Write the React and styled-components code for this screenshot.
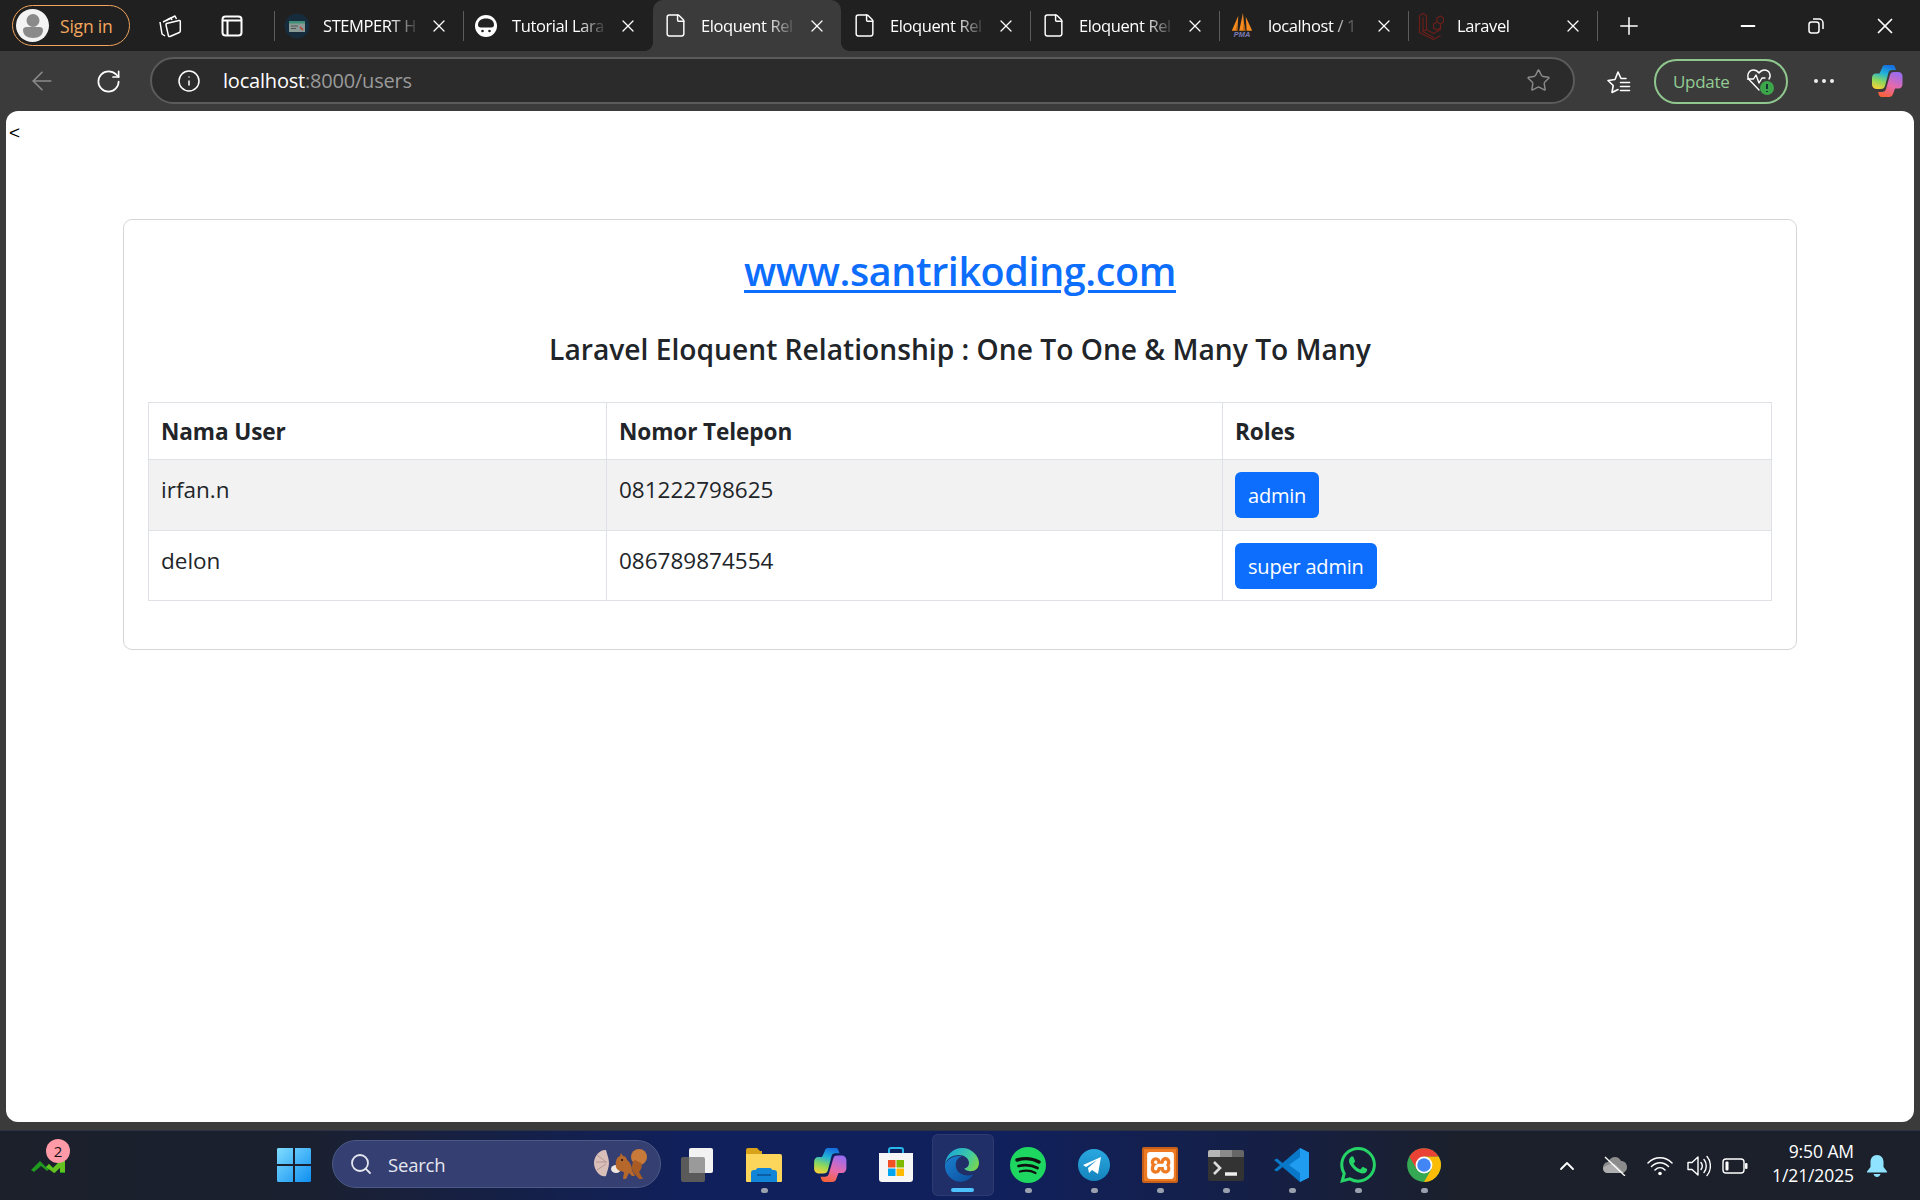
import styled, { createGlobalStyle } from 'styled-components';
import { X, Plus, ArrowLeft, RotateCw, Info, Star, Minus, ChevronUp, Search, File } from 'lucide-react';
import { SiWhatsapp, SiXampp } from 'react-icons/si';

const uiFont = `"Open Sans", "Noto Sans", "Liberation Sans", sans-serif`;

const Global = createGlobalStyle`
  html, body { margin: 0; padding: 0; background: #3b3b3b; }
  * { box-sizing: border-box; }
  svg { display: block; }
`;

const Screen = styled.div`
  width: 1920px;
  height: 1200px;
  display: flex;
  flex-direction: column;
  overflow: hidden;
  background: #3b3b3b;
  font-family: ${uiFont};
`;

/* ---------- tab strip ---------- */
const TabBar = styled.div`
  height: 51px;
  flex: none;
  display: flex;
  background: #202020;
  color: #fff;
`;

const ProfilePill = styled.div`
  width: 118px;
  height: 41px;
  margin: 5px 0 0 12px;
  padding-left: 3px;
  display: flex;
  align-items: center;
  gap: 11px;
  border: 1px solid #f0a45c;
  border-radius: 21px;
  color: #f4a75e;
  font-size: 17.5px;
  letter-spacing: -0.2px;
`;

const Avatar = styled.div`
  width: 33px;
  height: 33px;
  border-radius: 50%;
  background: #f3f3f3;
  display: flex;
  align-items: center;
  justify-content: center;
`;

const BarButton = styled.div`
  width: ${p => p.$w || 62}px;
  height: 51px;
  margin-left: ${p => p.$ml || 0}px;
  flex: none;
  display: flex;
  align-items: center;
  justify-content: center;
  color: ${p => p.$color || '#fff'};
`;

const TabSep = styled.div`
  width: 1px;
  height: 30px;
  margin-top: 11px;
  flex: none;
  background: ${p => (p.$hidden ? 'transparent' : '#5c5c5c')};
`;

const Tab = styled.div`
  position: relative;
  width: 188px;
  height: 51px;
  flex: none;
  display: flex;
  align-items: center;
  padding: 0 14px 0 9px;
  background: ${p => (p.$active ? '#3b3b3b' : 'transparent')};
  border-radius: ${p => (p.$active ? '10px 10px 0 0' : '0')};

  ${p => p.$active && `
    &::before, &::after {
      content: '';
      position: absolute;
      bottom: 0;
      width: 8px;
      height: 8px;
    }
    &::before { left: -8px; background: radial-gradient(circle at 0 0, #202020 7.5px, #3b3b3b 8px); }
    &::after { right: -8px; background: radial-gradient(circle at 100% 0, #202020 7.5px, #3b3b3b 8px); }
  `}
`;

const Favicon = styled.div`
  width: 26px;
  height: 26px;
  flex: none;
  display: flex;
  align-items: center;
  justify-content: center;
`;

const TabTitle = styled.div`
  margin-left: 13px;
  flex: none;
  font-size: 16.5px;
  letter-spacing: -0.4px;
  white-space: nowrap;
  -webkit-mask-image: linear-gradient(to right, #000 ${p => p.$fade ? '72%' : '100%'}, rgba(0,0,0,.12) 100%);
  mask-image: linear-gradient(to right, #000 ${p => p.$fade ? '72%' : '100%'}, rgba(0,0,0,.12) 100%);
`;

const TabClose = styled.div`
  margin-left: auto;
  flex: none;
`;

const WindowControls = styled.div`
  margin-left: auto;
  display: flex;
`;

/* ---------- toolbar ---------- */
const Toolbar = styled.div`
  height: 60px;
  flex: none;
  display: flex;
  align-items: center;
  padding-left: 9px;
  background: #3b3b3b;
  color: #fff;
`;

const ToolButton = styled.div`
  width: ${p => p.$w || 66}px;
  height: 46px;
  margin-left: ${p => p.$ml || 0}px;
  flex: none;
  display: flex;
  align-items: center;
  justify-content: center;
  color: ${p => p.$color || '#fff'};
`;

const AddressBar = styled.div`
  width: 1425px;
  height: 47px;
  margin-left: 9px;
  margin-top: -1px;
  flex: none;
  display: flex;
  align-items: center;
  padding-left: 25px;
  border: 2px solid #5b5b5b;
  border-radius: 24px;
  background: #2b2b2b;
`;

const Url = styled.div`
  margin-left: 22px;
  font-size: 20px;
  letter-spacing: -0.2px;
  color: #9a9a9a;

  b { font-weight: 400; color: #fff; }
`;

const AddressStar = styled.div`
  margin-left: auto;
  margin-right: 22px;
  color: #8a8a8a;
`;

const UpdatePill = styled.div`
  width: 134px;
  height: 45px;
  margin-left: 13px;
  flex: none;
  display: flex;
  align-items: center;
  padding-left: 17px;
  gap: 16px;
  border: 2px solid #8fc78f;
  border-radius: 23px;
  color: #93cc93;
  font-size: 17px;
  letter-spacing: -0.3px;
`;

const Dots = styled.div`
  display: flex;
  gap: 4px;

  span {
    width: 4px;
    height: 4px;
    border-radius: 50%;
    background: #eee;
  }
`;

/* ---------- page ---------- */
const Page = styled.main`
  width: 1908px;
  height: 1011px;
  flex: none;
  margin-left: 6px;
  padding-top: 10px;
  background: #fff;
  border-radius: 12px;
  overflow: hidden;
`;

const Stray = styled.div`
  height: 22px;
  padding-left: 3px;
  font-family: "Liberation Sans", sans-serif;
  font-size: 19px;
  line-height: 24px;
  color: #000;
`;

const Card = styled.section`
  width: 1674px;
  height: 431px;
  margin: 76px 0 0 117px;
  padding: 0 24px;
  border: 1.5px solid #d3d6d9;
  border-radius: 9px;
  text-align: center;
  color: #212529;
`;

const SiteTitle = styled.h3`
  margin: 19px 0 0;
  font-size: 39.5px;
  font-weight: 600;
  line-height: 64px;
  letter-spacing: -0.4px;

  a {
    color: #0d6efd;
    text-decoration: underline;
    text-decoration-thickness: 3px;
    text-underline-offset: 4px;
  }
`;

const SubTitle = styled.h5`
  margin: 24px 0 0;
  font-size: 28.2px;
  font-weight: 600;
  line-height: 44px;
`;

const UserTable = styled.table`
  width: 1624px;
  margin-top: 31px;
  border-collapse: collapse;
  table-layout: fixed;
  text-align: left;
  font-size: 22.5px;
`;

const Th = styled.th`
  height: 57px;
  padding: 0 12px 0;
  border: 1.5px solid #dee2e6;
  font-weight: 700;
  font-size: 22.6px;
  letter-spacing: -0.1px;
`;

const Row = styled.tr`
  background: ${p => (p.$striped ? '#f2f2f2' : '#fff')};
`;

const Td = styled.td`
  height: ${p => p.$h}px;
  padding: 15px 12px 0;
  border: 1.5px solid #dee2e6;
  vertical-align: top;
  line-height: 30px;
`;

const RoleCell = styled(Td)`
  padding-top: 12px;
`;

const RoleButton = styled.button`
  display: block;
  height: 46px;
  padding: 0 13px;
  border: none;
  border-radius: 6px;
  background: #0d6efd;
  color: #fff;
  font-family: ${uiFont};
  font-size: 20px;
  letter-spacing: -0.2px;
`;

const Gap = styled.div`
  height: 8px;
  flex: none;
  background: #3b3b3b;
`;

/* ---------- taskbar ---------- */
const Taskbar = styled.footer`
  height: 70px;
  flex: 1;
  display: flex;
  border-top: 1px solid #2c3345;
  background: linear-gradient(90deg, #1b202b 0%, #1b2030 16%, #10205c 36%, #10205c 52%, #151f45 66%, #1b202b 76%, #1b202b 100%);
  color: #fff;
`;

const Widget = styled.div`
  position: relative;
  width: 36px;
  height: 70px;
  margin-left: 30px;
  padding-top: 26px;
  flex: none;
`;

const Badge = styled.span`
  position: absolute;
  left: 16px;
  top: 8px;
  width: 24px;
  height: 24px;
  border-radius: 50%;
  background: #ff9aa6;
  color: #111;
  font-size: 15px;
  line-height: 24px;
  text-align: center;
`;

const StartButton = styled.div`
  margin: 16px 0 0 210px;
  flex: none;
`;

const SearchBox = styled.div`
  width: 329px;
  height: 48px;
  margin: 9px 0 0 20px;
  padding: 0 10px 0 16px;
  flex: none;
  display: flex;
  align-items: center;
  border: 1px solid #4b5a86;
  border-radius: 24px;
  background: #353f72;
  color: #e6e8f0;
  font-size: 18.5px;
`;

const SearchLabel = styled.span`
  margin-left: 15px;
  letter-spacing: -0.2px;
`;

const SearchArt = styled.div`
  margin-left: auto;
`;

const AppRow = styled.div`
  margin-left: 4px;
  display: flex;
  flex: none;
`;

const AppCell = styled.div`
  position: relative;
  width: 66px;
  height: 70px;
  padding-top: 16px;
  display: flex;
  flex-direction: column;
  align-items: center;

  ${p => p.$active && `
    &::before {
      content: '';
      position: absolute;
      left: 3px;
      top: 3px;
      width: 60px;
      height: 60px;
      border-radius: 6px;
      background: rgba(255,255,255,.07);
      border: 1px solid rgba(255,255,255,.06);
    }
  `}
`;

const AppIcon = styled.div`
  position: relative;
  width: 36px;
  height: 36px;
`;

const RunDot = styled.span`
  width: ${p => (p.$active ? 23 : 7)}px;
  height: ${p => (p.$active ? 4 : 5)}px;
  margin-top: 5px;
  position: relative;
  border-radius: 3px;
  background: ${p => (p.$active ? '#4cc2ff' : p.$off ? 'transparent' : '#9aa0ad')};
`;

const Tray = styled.div`
  margin-left: auto;
  padding-right: 32px;
  display: flex;
  align-items: center;
`;

const TrayIcon = styled.div`
  width: ${p => p.$w}px;
  flex: none;
  display: flex;
  justify-content: center;
  color: #fff;
`;

const Clock = styled.div`
  width: 100px;
  margin: -5px 0 0 1px;
  text-align: right;
  font-size: 17.5px;
  line-height: 24px;
  letter-spacing: -0.1px;
`;

const BellBox = styled.div`
  margin-left: 12px;
  color: #8fe3ff;
`;

/* ---------- drawings ---------- */
const ProfileGlyph = () => (
  <svg width="26" height="28" viewBox="0 0 26 28">
    <circle cx="13" cy="8.5" r="6.5" fill="#8a8a8a" />
    <path d="M3 18c0-2 1.500-3 3.500-3h13c2 0 3.500 1 3.500 3 0 5-4 8-10 8S3 23 3 18z" fill="#8a8a8a" />
  </svg>
);

const WorkspacesIcon = () => (
  <svg width="26" height="26" viewBox="0 0 26 26" fill="none" stroke="#fff" strokeWidth="1.5" strokeLinejoin="round">
    <path d="M10 7l8-4 1.500 3" />
    <path d="M6 9l8-4 1 2" />
    <path d="M3 9l2 12 3 2" />
    <path d="M9.500 10.500L22 7.500c.8-.2 1.300.2 1.300 1V18c0 .7-.3 1.200-1 1.500L13 23.500c-.8.300-1.500 0-1.600-.8L9 12c-.1-.7 0-1.300.5-1.500z" />
  </svg>
);

const VerticalTabsIcon = () => (
  <svg width="22" height="22" viewBox="0 0 22 22" fill="none" stroke="#fff" strokeWidth="2">
    <rect x="1.500" y="1.500" width="19" height="19" rx="3" />
    <path d="M1.500 5.500h19M6.500 5.500v15" />
  </svg>
);

const WindowFav = () => (
  <svg width="26" height="26" viewBox="0 0 26 26">
    <circle cx="13" cy="13" r="12.500" fill="#162b3b" />
    <rect x="5" y="8" width="16" height="11" fill="#8a9a96" />
    <rect x="5" y="8" width="16" height="2.500" fill="#3f8f78" />
    <path d="M7 13h7M7 15.500h5" stroke="#555" strokeWidth="1" />
    <path d="M16 14l3 3" stroke="#c0392b" strokeWidth="1.500" />
  </svg>
);

const HatFav = () => (
  <svg width="24" height="24" viewBox="0 0 24 24">
    <circle cx="12" cy="12" r="11" fill="#fff" />
    <path d="M4 11c0-4 3-6.500 8-6.500S20 7 20 11c0 1.500-1 2.500-2.500 2.500h-11C5 13.500 4 12.500 4 11z" fill="#222" />
    <circle cx="8.500" cy="17" r="1.300" fill="#222" />
    <circle cx="15.500" cy="17" r="1.300" fill="#222" />
  </svg>
);

const PmaFav = () => (
  <svg width="28" height="28" viewBox="0 0 28 28">
    <path d="M3 19L10 3 9 19zM11 19L15 0l2 19zM19 19L18 4l7 15z" fill="#f58a1f" />
    <path d="M7 19l2-8v8zM15 19l1-9 2 9z" fill="#b9620f" />
    <text x="14" y="26" textAnchor="middle" fontSize="8" fontWeight="700" fontStyle="italic" fill="#7c7cb5" fontFamily="Liberation Sans">PMA</text>
  </svg>
);

const LaravelFav = () => (
  <svg width="26" height="28" viewBox="0 0 26 28" fill="none" stroke="#6b1f1a" strokeWidth="1.200" strokeLinejoin="round">
    <path d="M1.500 3.500l3.500-2 3.500 2v14l7 4 7-4v-5" />
    <path d="M1.500 3.500v17l14 7 7-4" />
    <path d="M5 5.500v14l10.500 6M8.500 17.500l-3.500 2" />
    <path d="M15.500 12l3.500-2 3.500 2v4l-3.500 2-3.500-2zM19 10V6l3.500-2 3 2v4l-3 2" />
  </svg>
);

const StarListIcon = () => (
  <svg width="26" height="26" viewBox="0 0 26 26" fill="none" stroke="#fff" strokeWidth="1.600" strokeLinejoin="round" strokeLinecap="round">
    <path d="M12 21.500l-6 3 1.200-7L2 12.500l7-1L12 4l3 6.500h5" />
    <path d="M14.500 14.500h9M14.500 18.500h9M14.500 22.500h9" />
  </svg>
);

const HeartIcon = () => (
  <svg width="30" height="30" viewBox="0 0 30 30">
    <g fill="none" stroke="#fff" strokeWidth="1.400" strokeLinejoin="round" strokeLinecap="round">
      <path d="M14 24L4.500 14C1 10 3.500 4 8.500 4c2.500 0 4 1 5.500 3 1.500-2 3-3 5.500-3 5 0 7 5.500 4.500 9" />
      <path d="M2.500 13h6l2.500-4 3 8 3-5h3" />
    </g>
    <circle cx="22" cy="22" r="7" fill="#3da64a" />
    <path d="M22 18v5M22 25v1" stroke="#123" strokeWidth="1.700" />
  </svg>
);

const CopilotIcon = ({ size = 34, id = 'cp' }) => (
  <svg width={size} height={size} viewBox="0 0 34 34">
    <defs>
      <linearGradient id={`${id}a`} x1="0.600" y1="0" x2="0.300" y2="1">
        <stop offset="0" stopColor="#1570e0" />
        <stop offset=".35" stopColor="#23b2d8" />
        <stop offset=".7" stopColor="#8ed85a" />
        <stop offset="1" stopColor="#f2d23a" />
      </linearGradient>
      <linearGradient id={`${id}b`} x1="0.700" y1="0" x2="0.300" y2="1">
        <stop offset="0" stopColor="#9a6cf0" />
        <stop offset=".55" stopColor="#e86aa8" />
        <stop offset="1" stopColor="#f5613a" />
      </linearGradient>
    </defs>
    <path d="M15 1h7c1.500 0 2.500.6 3 2l1 3h-4c-2 0-3 1-3.500 2.500L15 22c-.6 2-2 3-4 3H7c-3 0-5-2-5-4.500V14c0-2.500 1.500-4.500 4-4.500h3.500L12 4c.5-2 1.500-3 3-3z" fill={`url(#${id}a)`} />
    <path d="M26 8h2c3 0 4.500 2 4.500 4.500V20c0 2.500-1.500 4.500-4 4.500H25L23 30c-.5 2-2 3-4 3h-7c-1.500 0-2.500-.6-3-2l-1-3h4c2 0 3.500-1 4-3l4-14c.5-1.800 1.500-3 4-3z" fill={`url(#${id}b)`} />
  </svg>
);

const WinLogo = () => (
  <svg width="36" height="36" viewBox="0 0 36 36">
    <defs>
      <linearGradient id="win" x1="0" y1="0" x2="1" y2="1">
        <stop offset="0" stopColor="#7fdcff" />
        <stop offset="1" stopColor="#0f8ff0" />
      </linearGradient>
    </defs>
    <path d="M1 2.500C1 1.600 1.600 1 2.500 1H17v16H1zM19 1h14.500c.9 0 1.500.6 1.500 1.500V17H19zM1 19h16v16H2.500C1.600 35 1 34.400 1 33.500zM19 19h16v14.500c0 .9-.6 1.500-1.500 1.500H19z" fill="url(#win)" />
  </svg>
);

const SquirrelArt = () => (
  <svg width="58" height="34" viewBox="0 0 58 34">
    <path d="M2 16C2 8 9 2 14 3c1 4 3 9 3 13s-2 9-3 13C9 31 2 24 2 16z" fill="#d9bfb8" />
    <path d="M5 8l9 7M4 15h11M5 23l9-6" stroke="#a98e8a" strokeWidth=".8" />
    <ellipse cx="24" cy="22" rx="5" ry="4" fill="#efe6e0" />
    <path d="M24 20c-1-6 1-10 4-11l1-3 2 3c2 0 4 2 4 4 3 2 5 6 5 10l3 6h-3l-3-3-3 6h-3l1-7c-3-1-7-1-8-5z" fill="#b5672c" />
    <circle cx="47" cy="10" r="8" fill="#c77a3a" />
    <path d="M40 22c0-6 1-8 3-9l6 3c2 3 0 7-2 9l4 7h-4l-5-6z" fill="#a85c24" />
    <circle cx="30" cy="13" r="1" fill="#111" />
  </svg>
);

const TaskViewIcon = () => (
  <svg width="36" height="36" viewBox="0 0 36 36">
    <rect x="1" y="10" width="24" height="25" rx="2" fill="#5a5a5a" />
    <rect x="9" y="1" width="24" height="25" rx="2" fill="#f2f2f2" />
    <path d="M9 10h14a2 2 0 0 1 2 2v14H11a2 2 0 0 1-2-2z" fill="#9a9a9a" />
  </svg>
);

const ExplorerIcon = () => (
  <svg width="36" height="36" viewBox="0 0 36 36">
    <path d="M0 3a2 2 0 0 1 2-2h9l3 3h2v4H0z" fill="#d9a21b" />
    <path d="M0 7h34a2 2 0 0 1 2 2v25a1 1 0 0 1-1 1H1a1 1 0 0 1-1-1z" fill="#fbd65a" />
    <path d="M5 35l0-9a3 3 0 0 1 3-3h1.500l2-2h13l2 2H28a3 3 0 0 1 3 3v9z" fill="#1185d8" />
    <path d="M11 28h14" stroke="#0b5ea3" strokeWidth="2" />
  </svg>
);

const StoreIcon = () => (
  <svg width="36" height="36" viewBox="0 0 36 36">
    <path d="M11 6V3a2 2 0 0 1 2-2h10a2 2 0 0 1 2 2v3" fill="none" stroke="#29b6e8" strokeWidth="2" />
    <path d="M1 6h34v26a3 3 0 0 1-3 3H4a3 3 0 0 1-3-3z" fill="#f6f6f6" />
    <rect x="10" y="13" width="7.500" height="7.500" fill="#f25022" />
    <rect x="18.500" y="13" width="7.500" height="7.500" fill="#7fba00" />
    <rect x="10" y="21.500" width="7.500" height="7.500" fill="#00a4ef" />
    <rect x="18.500" y="21.500" width="7.500" height="7.500" fill="#ffb900" />
  </svg>
);

const EdgeIcon = () => (
  <svg width="36" height="36" viewBox="0 0 36 36">
    <defs>
      <linearGradient id="edgeTop" x1="0" y1="0.300" x2="1" y2="0.700">
        <stop offset="0" stopColor="#1aa5d8" />
        <stop offset=".6" stopColor="#3cc9a8" />
        <stop offset="1" stopColor="#7ad64e" />
      </linearGradient>
      <linearGradient id="edgeLow" x1="0" y1="0" x2="1" y2="1">
        <stop offset="0" stopColor="#1a7fd0" />
        <stop offset="1" stopColor="#0c4f9c" />
      </linearGradient>
    </defs>
    <path d="M1 17C2 8 9 1 18 1c10 0 17 8 17 15 0 6-5 9-10 8-3-.5-5-2-4.500-2.500C23 21 25 19 25 16c0-5-5-8-10-8C9 8 3 11 1 17z" fill="url(#edgeTop)" />
    <path d="M1 17c3-5 8-8 14-8 2 0 3 .3 3 .3-5 1.700-7 6-6 11 1 6 8 9 14 8 1.500-.2 2.500-.5 3-.5-3 4-7 7-12 7C8 35 0 27 1 17z" fill="url(#edgeLow)" />
  </svg>
);

const SpotifyIcon = () => (
  <svg width="36" height="36" viewBox="0 0 36 36">
    <circle cx="18" cy="18" r="18" fill="#1ed760" />
    <g fill="none" stroke="#111" strokeLinecap="round">
      <path d="M7 13c7-2 15-2 22 2" strokeWidth="3.400" />
      <path d="M8.500 19c6-1.500 13-1.300 19 2" strokeWidth="2.800" />
      <path d="M10 24.500c5-1.200 11-1 15.500 1.500" strokeWidth="2.300" />
    </g>
  </svg>
);

const TelegramIcon = () => (
  <svg width="36" height="36" viewBox="0 0 36 36">
    <defs>
      <linearGradient id="tg" x1="0.500" y1="0" x2="0.500" y2="1">
        <stop offset="0" stopColor="#2aa8e0" />
        <stop offset="1" stopColor="#1583bd" />
      </linearGradient>
    </defs>
    <circle cx="18" cy="18" r="16" fill="url(#tg)" />
    <path d="M7 18l18-8-3 17-6-4-3 3-1-5 9-8-11 7z" fill="#fff" />
  </svg>
);

const XamppTile = styled.div`
  width: 36px;
  height: 36px;
  display: flex;
  align-items: center;
  justify-content: center;
  border-radius: 3px;
  background: #ee7a23;
  box-shadow: inset 0 0 0 2px #c65f17;
  color: #fff;
`;

const TerminalIcon = () => (
  <svg width="36" height="36" viewBox="0 0 36 36">
    <rect y="3" width="36" height="31" rx="2" fill="#333" />
    <path d="M2 3h10v7H0V5a2 2 0 0 1 2-2z" fill="#b5b5b5" />
    <rect x="12" y="3" width="12" height="7" fill="#8a8a8a" />
    <path d="M24 3h10a2 2 0 0 1 2 2v5H24z" fill="#666" />
    <path d="M6 15l6 6-6 6" fill="none" stroke="#ddd" strokeWidth="2.600" />
    <path d="M17 27h12" stroke="#eee" strokeWidth="3.500" />
  </svg>
);

const VsCodeIcon = () => (
  <svg width="36" height="36" viewBox="0 0 36 36">
    <path d="M26 1l9 4.500v25L26 35 8.500 20 3 24.500 0 23l6-5-6-5 3-1.500L8.500 16z" fill="#0a78c8" />
    <path d="M26 1l9 4.500v25L26 35 26 10 15 18l11 8z" fill="#1f9cf0" />
  </svg>
);

const ChromeIcon = () => (
  <svg width="36" height="36" viewBox="0 0 32 32">
    <circle cx="16" cy="16" r="15" fill="#34a853" />
    <path d="M29 8.500A15 15 0 0 1 16 31l6.500-11.250L16 8.500z" fill="#fbbc05" />
    <path d="M16 1a15 15 0 0 1 13 7.500H16L9.500 19.750 3 8.500A15 15 0 0 1 16 1z" fill="#ea4335" />
    <circle cx="16" cy="16" r="7.500" fill="#fff" />
    <circle cx="16" cy="16" r="6" fill="#4285f4" />
  </svg>
);

const StockIcon = () => (
  <svg width="36" height="18" viewBox="0 0 36 18">
    <path d="M1 13l9-9 6 6 3-3 4 4 5-5 3 0 4-3v13h-5V10l-5 6-5-5-3 3-6-5-7 6z" fill="#1f9a1f" />
    <path d="M16 10l3-3 4 4 7-7h5v11h-5V11l-6 5z" fill="#63c21f" />
  </svg>
);

const CloudOffIcon = () => (
  <svg width="26" height="20" viewBox="0 0 26 20">
    <path d="M6 6c1-3 4-5 7-5 3 0 5 2 6 4 3 0 6 2 6 6 0 4-3 6-6 6H6c-3 0-5-2-5-5 0-3 2-6 5-6z" fill="#8c8c8c" />
    <path d="M1 12c0-1 8-5 12-4l9 9H6c-3 0-5-2-5-5z" fill="#c4c4c4" opacity=".6" />
    <path d="M3 1l20 19" stroke="#fff" strokeWidth="1.300" />
  </svg>
);

const WifiIcon = () => (
  <svg width="26" height="20" viewBox="0 0 26 20" fill="none" stroke="#fff" strokeWidth="1.500" strokeLinecap="round">
    <path d="M1 7c7-7 17-7 24 0M4.500 10.500c5-5 12-5 17 0M8 14c3-3 7-3 10 0" />
    <circle cx="13" cy="17.500" r="1.800" fill="#fff" stroke="none" />
  </svg>
);

const SpeakerIcon = () => (
  <svg width="24" height="22" viewBox="0 0 24 22" fill="none" stroke="#fff" strokeWidth="1.400" strokeLinejoin="round" strokeLinecap="round">
    <path d="M1 7.500h4L11 2v18l-6-5.500H1z" />
    <path d="M14 7.500c1.500 2 1.500 5 0 7M17 4.500c3 3.500 3 9.500 0 13M20 1.500c4.500 5 4.500 14 0 19" />
  </svg>
);

const BatteryIcon = () => (
  <svg width="26" height="18" viewBox="0 0 26 18">
    <rect x="1" y="2" width="21" height="14" rx="3" fill="none" stroke="#fff" strokeWidth="1.400" />
    <rect x="3.500" y="4.500" width="3" height="9" rx="1" fill="#fff" />
    <rect x="23" y="6" width="2.500" height="6" rx="1" fill="#fff" />
  </svg>
);

const BellIcon = () => (
  <svg width="22" height="24" viewBox="0 0 22 24" fill="currentColor">
    <path d="M11 1c4 0 6.500 3 6.500 7v5l3.500 4.500c.3.500 0 1-.5 1h-19c-.5 0-.8-.5-.5-1L4.500 13V8c0-4 2.500-7 6.500-7z" />
    <path d="M7.500 20h7c-.5 2-2 3-3.500 3s-3-1-3.500-3z" />
  </svg>
);

const tabs = [
  { title: 'STEMPERT H', fade: true, fav: <WindowFav /> },
  { title: 'Tutorial Lara', fade: true, fav: <HatFav /> },
  { title: 'Eloquent Rel', fade: true, fav: <File size={25} strokeWidth={1.4} />, active: true },
  { title: 'Eloquent Rel', fade: true, fav: <File size={25} strokeWidth={1.4} /> },
  { title: 'Eloquent Rel', fade: true, fav: <File size={25} strokeWidth={1.4} /> },
  { title: 'localhost / 1', fade: true, fav: <PmaFav /> },
  { title: 'Laravel', fav: <LaravelFav /> },
];

const apps = [
  { name: 'task', icon: <TaskViewIcon />, off: true },
  { name: 'files', icon: <ExplorerIcon /> },
  { name: 'copilot', icon: <CopilotIcon size={36} id="cpt" />, off: true },
  { name: 'store', icon: <StoreIcon />, off: true },
  { name: 'edge', icon: <EdgeIcon />, active: true },
  { name: 'spotify', icon: <SpotifyIcon /> },
  { name: 'telegram', icon: <TelegramIcon /> },
  { name: 'xampp', icon: <XamppTile><SiXampp size={27} /></XamppTile> },
  { name: 'terminal', icon: <TerminalIcon /> },
  { name: 'vscode', icon: <VsCodeIcon /> },
  { name: 'whatsapp', icon: <SiWhatsapp size={36} color="#25d366" /> },
  { name: 'chrome', icon: <ChromeIcon /> },
];

const users = [
  { name: 'irfan.n', phone: '081222798625', role: 'admin', h: 71, striped: true },
  { name: 'delon', phone: '086789874554', role: 'super admin', h: 70 },
];

function App() {
  return (
    <Screen>
      <Global />
      <TabBar>
        <ProfilePill>
          <Avatar><ProfileGlyph /></Avatar>
          Sign in
        </ProfilePill>
        <BarButton $w={62} $ml={9}><WorkspacesIcon /></BarButton>
        <BarButton $w={62}><VerticalTabsIcon /></BarButton>
        <BarButton $w={11} />
        <TabSep />
        {tabs.map((tab, i) => (
          <div key={i} style={{ display: 'contents' }}>
            <Tab $active={tab.active}>
              <Favicon>{tab.fav}</Favicon>
              <TabTitle $fade={tab.fade}>{tab.title}</TabTitle>
              <TabClose><X size={20} strokeWidth={1.5} /></TabClose>
            </Tab>
            <TabSep $hidden={tab.active || (tabs[i + 1] && tabs[i + 1].active)} />
          </div>
        ))}
        <BarButton $w={62}><Plus size={28} strokeWidth={1.3} /></BarButton>
        <WindowControls>
          <BarButton $w={68}><Minus size={22} strokeWidth={2} /></BarButton>
          <BarButton $w={68}>
            <svg width="16" height="18" viewBox="0 0 16 18" fill="none" stroke="#fff" strokeWidth="1.500">
              <rect x="1" y="5" width="10" height="11" rx="2.500" />
              <path d="M5 2h6a4 4 0 0 1 4 4v6" />
            </svg>
          </BarButton>
          <BarButton $w={70}><X size={26} strokeWidth={1.6} /></BarButton>
        </WindowControls>
      </TabBar>

      <Toolbar>
        <ToolButton $color="#8c8c8c"><ArrowLeft size={30} strokeWidth={1.3} /></ToolButton>
        <ToolButton><RotateCw size={27} strokeWidth={1.5} /></ToolButton>
        <AddressBar>
          <Info size={24} strokeWidth={1.5} color="#fff" />
          <Url><b>localhost</b>:8000/users</Url>
          <AddressStar><Star size={25} strokeWidth={1.4} /></AddressStar>
        </AddressBar>
        <ToolButton $w={44} $ml={22}><StarListIcon /></ToolButton>
        <UpdatePill>Update <HeartIcon /></UpdatePill>
        <ToolButton $w={44} $ml={14}><Dots><span /><span /><span /></Dots></ToolButton>
        <ToolButton $w={40} $ml={21}><CopilotIcon /></ToolButton>
      </Toolbar>

      <Page>
        <Stray>&lt;</Stray>
        <Card>
          <SiteTitle><a href="#top">www.santrikoding.com</a></SiteTitle>
          <SubTitle>Laravel Eloquent Relationship : One To One &amp; Many To Many</SubTitle>
          <UserTable>
            <colgroup>
              <col style={{ width: 458 }} />
              <col style={{ width: 616 }} />
              <col />
            </colgroup>
            <thead>
              <tr>
                <Th>Nama User</Th>
                <Th>Nomor Telepon</Th>
                <Th>Roles</Th>
              </tr>
            </thead>
            <tbody>
              {users.map(user => (
                <Row key={user.name} $striped={user.striped}>
                  <Td $h={user.h}>{user.name}</Td>
                  <Td $h={user.h}>{user.phone}</Td>
                  <RoleCell $h={user.h}><RoleButton>{user.role}</RoleButton></RoleCell>
                </Row>
              ))}
            </tbody>
          </UserTable>
        </Card>
      </Page>
      <Gap />

      <Taskbar>
        <Widget>
          <StockIcon />
          <Badge>2</Badge>
        </Widget>
        <StartButton><WinLogo /></StartButton>
        <SearchBox>
          <Search size={24} strokeWidth={1.8} />
          <SearchLabel>Search</SearchLabel>
          <SearchArt><SquirrelArt /></SearchArt>
        </SearchBox>
        <AppRow>
          {apps.map(app => (
            <AppCell key={app.name} $active={app.active}>
              <AppIcon>{app.icon}</AppIcon>
              <RunDot $active={app.active} $off={app.off} />
            </AppCell>
          ))}
        </AppRow>
        <Tray>
          <TrayIcon $w={48}><ChevronUp size={24} strokeWidth={1.8} /></TrayIcon>
          <TrayIcon $w={48}><CloudOffIcon /></TrayIcon>
          <TrayIcon $w={42}><WifiIcon /></TrayIcon>
          <TrayIcon $w={36}><SpeakerIcon /></TrayIcon>
          <TrayIcon $w={36}><BatteryIcon /></TrayIcon>
          <Clock>9:50 AM<br />1/21/2025</Clock>
          <BellBox><BellIcon /></BellBox>
        </Tray>
      </Taskbar>
    </Screen>
  );
}

export default App;
